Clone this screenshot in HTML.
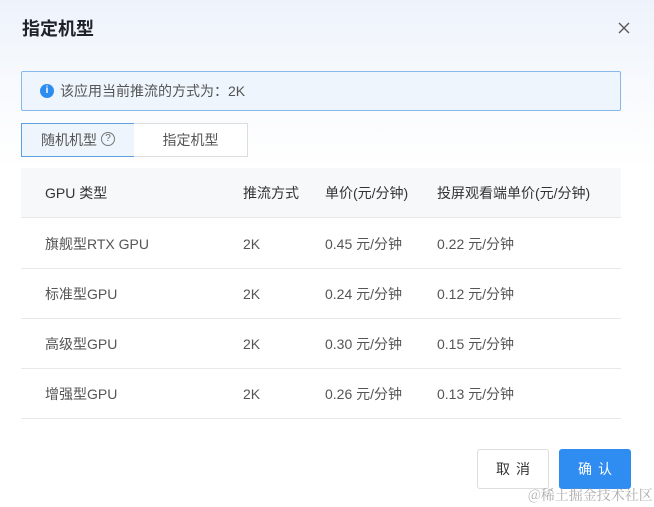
<!DOCTYPE html>
<html><head><meta charset="utf-8"><style>
*{margin:0;padding:0;box-sizing:border-box}
body{width:654px;height:507px;overflow:hidden;background:linear-gradient(180deg,#eef3fb 0px,#fbfcfe 120px,#fff 170px);font-family:"Liberation Sans","Noto Sans CJK SC",sans-serif;color:#333;position:relative}
.a{position:absolute}
.title{left:22px;top:15px;font-size:18px;font-weight:bold;color:#1f2329}
.alert{left:21px;top:71px;width:600px;height:40px;border:1px solid #86b8ea;background:#eef5fd;border-radius:2px;font-size:14px;color:#555;line-height:38px;padding-left:38px}
.ic{left:18px;top:12px;width:14px;height:14px;border-radius:50%;background:#2d8cf0;color:#fff;font-size:10px;line-height:14px;text-align:center;font-weight:bold}
.tab{top:123px;height:34px;font-size:14px;line-height:32px;text-align:center;color:#555}
.tab1{left:21px;width:114px;border:1px solid #5d9fe0;background:#eef5fd}
.tab2{left:134px;width:114px;border:1px solid #ddd;border-left:none;background:#fff}
.q{display:inline-block;width:14px;height:14px;border:1px solid #777;border-radius:50%;font-size:10px;line-height:12px;margin-left:4px;vertical-align:middle;position:relative;top:-2px;color:#666}
.hdr{left:21px;top:168px;width:600px;height:50px;background:#f7f8fa;border-bottom:1px solid #e8e8e8}
.row{left:21px;width:600px;height:50px;border-bottom:1px solid #e8e8e8}
.c{position:absolute;top:0;line-height:50px;font-size:14px;color:#555;white-space:nowrap}
.hdr .c{color:#333}
.btn{top:449px;width:72px;height:40px;border-radius:3px;font-size:14px;line-height:38px;text-align:center;letter-spacing:6px;text-indent:6px}
</style></head><body>
<div class="a title">指定机型</div>
<svg class="a" style="left:618px;top:22px" width="12" height="12" viewBox="0 0 12 12"><path d="M1 1L11 11M11 1L1 11" stroke="#555" stroke-width="1.3"/></svg>
<div class="a alert"><div class="a ic">i</div>该应用当前推流的方式为：2K</div>
<div class="a tab tab1">随机机型<span class="q">?</span></div>
<div class="a tab tab2">指定机型</div>
<div class="a hdr"><span class="c" style="left:24px">GPU 类型</span><span class="c" style="left:222px">推流方式</span><span class="c" style="left:304px">单价(元/分钟)</span><span class="c" style="left:416px">投屏观看端单价(元/分钟)</span></div>
<div class="a row" style="top:219px"><span class="c" style="left:24px">旗舰型RTX GPU</span><span class="c" style="left:222px">2K</span><span class="c" style="left:304px">0.45 元/分钟</span><span class="c" style="left:416px">0.22 元/分钟</span></div>
<div class="a row" style="top:269px"><span class="c" style="left:24px">标准型GPU</span><span class="c" style="left:222px">2K</span><span class="c" style="left:304px">0.24 元/分钟</span><span class="c" style="left:416px">0.12 元/分钟</span></div>
<div class="a row" style="top:319px"><span class="c" style="left:24px">高级型GPU</span><span class="c" style="left:222px">2K</span><span class="c" style="left:304px">0.30 元/分钟</span><span class="c" style="left:416px">0.15 元/分钟</span></div>
<div class="a row" style="top:369px"><span class="c" style="left:24px">增强型GPU</span><span class="c" style="left:222px">2K</span><span class="c" style="left:304px">0.26 元/分钟</span><span class="c" style="left:416px">0.13 元/分钟</span></div>
<div class="a btn" style="left:477px;border:1px solid #ddd;background:#fff;color:#333">取消</div>
<div class="a btn" style="left:559px;background:#2f8cf0;color:#fff;border:1px solid #2f8cf0">确认</div>
<div class="a" style="left:528px;top:485px;font-size:14px;color:rgba(150,150,150,0.8);font-family:'Noto Serif CJK SC',serif">@稀土掘金技术社区</div>
</body></html>
